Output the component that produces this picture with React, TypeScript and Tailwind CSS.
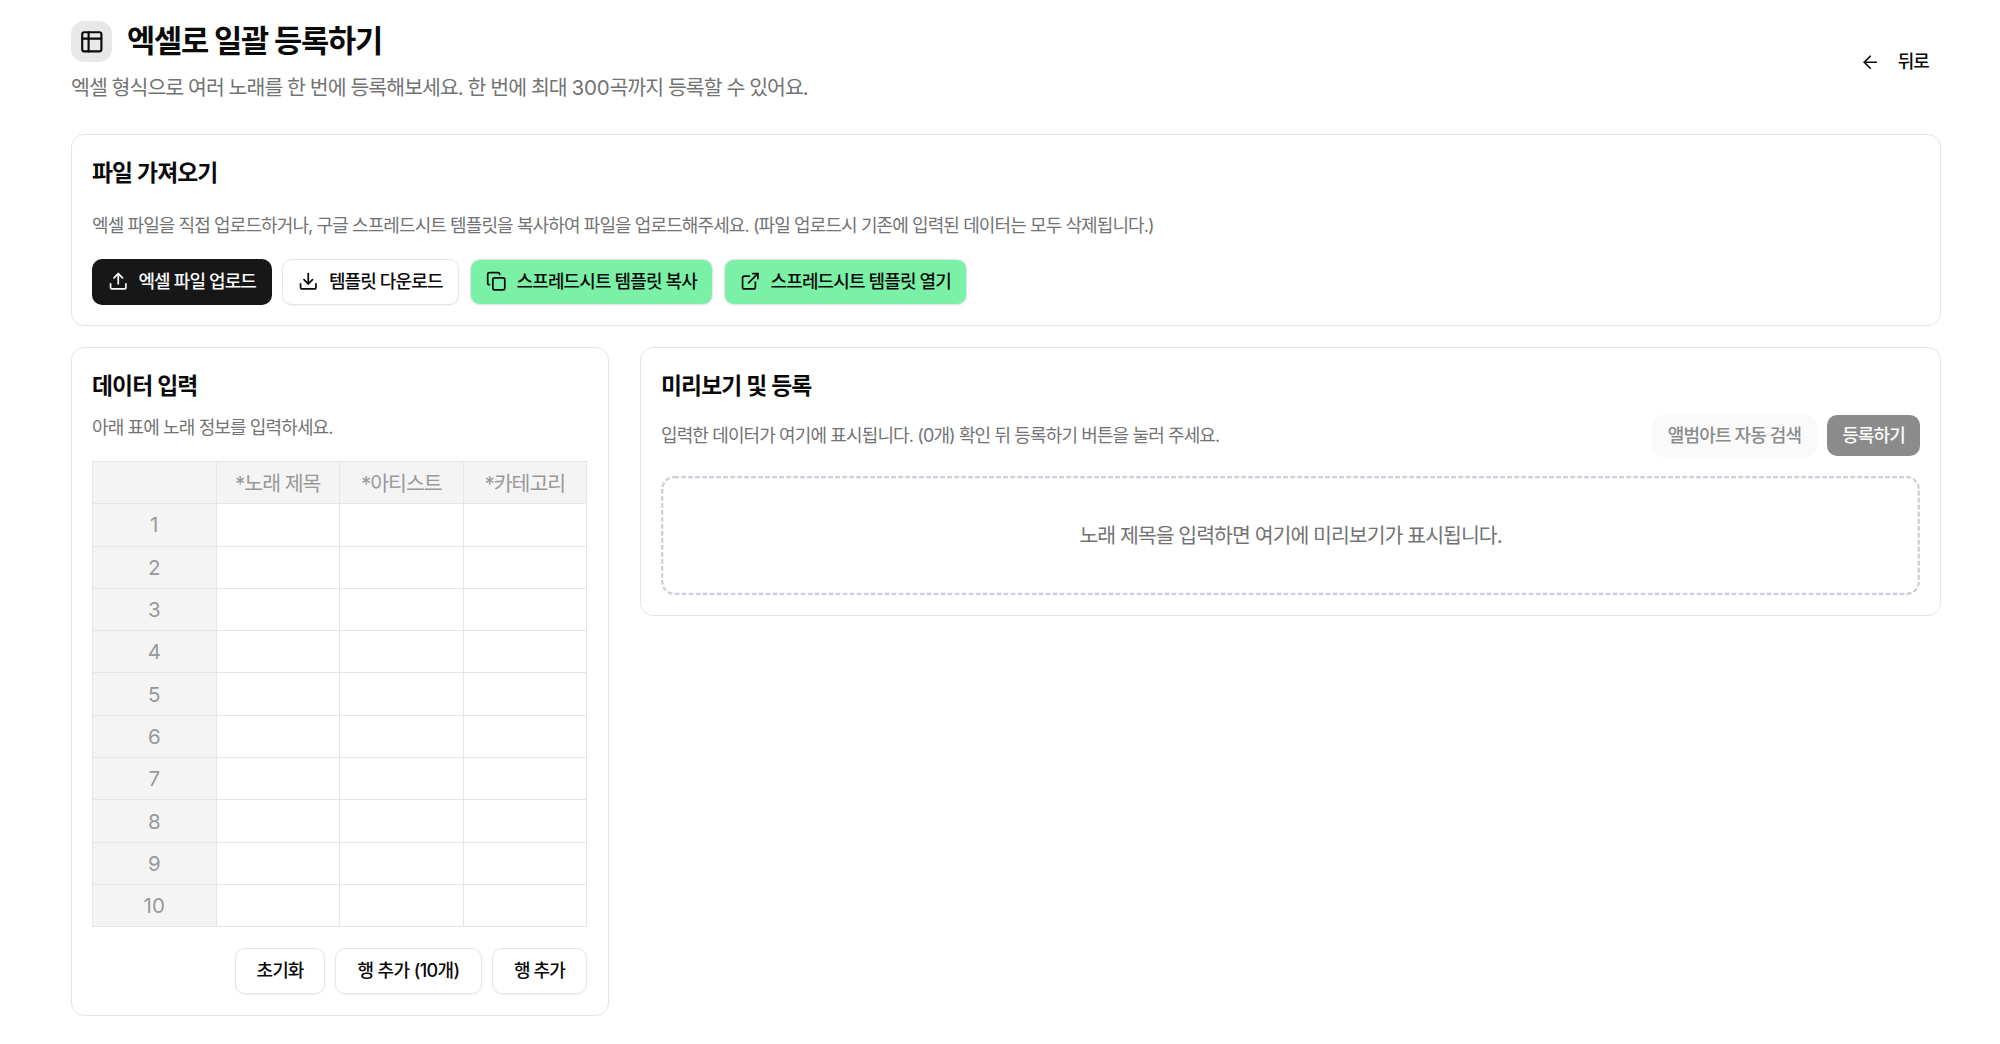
import type { ReactNode } from 'react';
import { ArrowLeft, Copy, Download, ExternalLink, Upload } from 'lucide-react';
import { clsx } from 'clsx';

const COLUMNS = ['*노래 제목', '*아티스트', '*카테고리'];
const ROWS = Array.from({ length: 10 }, (_, i) => i + 1);

function TableIcon() {
  return (
    <svg
      className="size-[25.6px]"
      viewBox="0 0 24 24"
      fill="none"
      stroke="currentColor"
      strokeWidth="2"
      strokeLinecap="round"
      strokeLinejoin="round"
    >
      <rect x="3" y="3" width="18" height="18" rx="2" />
      <path d="M3 9h18" />
      <path d="M9 3v18" />
    </svg>
  );
}

function Card({ className, children }: { className?: string; children: ReactNode }) {
  return (
    <section className={clsx('rounded-[13px] border border-[#e5e5e5] bg-white px-5 pt-[22px]', className)}>
      {children}
    </section>
  );
}

function CardTitle({ children }: { children: ReactNode }) {
  return <h2 className="text-[22.8px] leading-[31px] font-semibold">{children}</h2>;
}

function Button({ className, children }: { className?: string; children: ReactNode }) {
  return (
    <button
      type="button"
      className={clsx(
        'flex shrink-0 items-center justify-center rounded-[10px] text-[18px] font-medium whitespace-nowrap',
        className
      )}
    >
      {children}
    </button>
  );
}

export default function App() {
  return (
    <div className="min-h-screen bg-white pt-[21px] pr-[59px] pl-[71px] font-[Inter,'Noto_Sans_CJK_KR',sans-serif] tracking-[-0.88px] text-[#0a0a0a]">
      {/* Header */}
      <header className="flex h-[82px] items-center justify-between">
        <div>
          <div className="flex h-[41px] items-center gap-[15px]">
            <div className="flex size-[41px] items-center justify-center rounded-[13px] bg-[#e8e8e8]">
              <TableIcon />
            </div>
            <h1 className="-mt-0.5 text-[30.7px] leading-[41px] font-bold tracking-[-1.25px]">엑셀로 일괄 등록하기</h1>
          </div>
          <p className="mt-2.5 text-[20.5px] leading-[31px] tracking-[-0.96px] text-[#737373]">
            엑셀 형식으로 여러 노래를 한 번에 등록해보세요. 한 번에 최대{' '}
            <span className="tracking-[-0.2px]">300</span>곡까지 등록할 수 있어요.
          </p>
        </div>
        <button type="button" className="flex items-center gap-[17px] pr-[12px] text-[18px] font-medium">
          <ArrowLeft className="size-[20.5px]" />
          <span className="-mt-0.5">뒤로</span>
        </button>
      </header>

      <main className="mt-[31px] flex flex-col gap-[21px]">
        {/* File import */}
        <Card className="h-[192px]">
          <CardTitle>파일 가져오기</CardTitle>
          <p className="mt-[25px] text-[18px] leading-[26px] tracking-[-0.9px] text-[#737373]">
            엑셀 파일을 직접 업로드하거나, 구글 스프레드시트 템플릿을 복사하여 파일을 업로드해주세요. (파일 업로드시 기존에 입력된 데이터는 모두 삭제됩니다.)
          </p>
          <div className="mt-5 flex gap-[11px]">
            <Button className="-mr-px h-[46px] w-[180px] gap-2.5 bg-[#171717] pb-px text-[#fafafa]">
              <Upload className="size-[20.5px]" />
              엑셀 파일 업로드
            </Button>
            <Button className="h-[46px] w-[177px] gap-2.5 border border-[#e5e5e5] bg-white pb-px shadow-xs">
              <Download className="size-[20.5px]" />
              템플릿 다운로드
            </Button>
            <Button className="h-[46px] w-[243px] gap-2.5 border border-[#e5e5e5] bg-[#7bf1a8] pb-px shadow-xs">
              <Copy className="size-[20.5px]" />
              스프레드시트 템플릿 복사
            </Button>
            <Button className="h-[46px] w-[243px] gap-2.5 border border-[#e5e5e5] bg-[#7bf1a8] pb-px shadow-xs">
              <ExternalLink className="size-[20.5px]" />
              스프레드시트 템플릿 열기
            </Button>
          </div>
        </Card>

        <div className="flex items-start gap-[31px]">
          {/* Data entry */}
          <Card className="h-[669px] w-[538px] shrink-0">
            <CardTitle>데이터 입력</CardTitle>
            <p className="mt-3.5 text-[18px] leading-[26px] text-[#737373]">아래 표에 노래 정보를 입력하세요.</p>
            <table className="mt-5 w-[495px] table-fixed border-collapse text-[20.5px] leading-[30px] text-[#999]">
              <thead>
                <tr className="h-[42.3px] bg-[#f4f4f4]">
                  <th className="border border-[#e6e6e6]" />
                  {COLUMNS.map((column) => (
                    <th key={column} className="border border-[#e6e6e6] p-0 pt-0.5 font-normal tracking-[-1px]">
                      {column}
                    </th>
                  ))}
                </tr>
              </thead>
              <tbody>
                {ROWS.map((row) => (
                  <tr key={row} className="h-[42.3px]">
                    <td className="border border-[#e6e6e6] bg-[#f4f4f4] p-0 pt-px text-center tracking-normal">{row}</td>
                    {COLUMNS.map((column) => (
                      <td key={column} className="border border-[#e6e6e6] p-0" />
                    ))}
                  </tr>
                ))}
              </tbody>
            </table>
            <div className="mt-[21px] flex justify-end gap-2.5 pr-px">
              <Button className="h-[46px] w-[90px] border border-[#e5e5e5] pb-px shadow-xs">초기화</Button>
              <Button className="h-[46px] w-[147px] border border-[#e5e5e5] pb-px tracking-[-0.6px] shadow-xs">
                행 추가 (10개)
              </Button>
              <Button className="h-[46px] w-[95px] border border-[#e5e5e5] pb-px shadow-xs">행 추가</Button>
            </div>
          </Card>

          {/* Preview */}
          <Card className="h-[269px] flex-1">
            <CardTitle>미리보기 및 등록</CardTitle>
            <div className="mt-3.5 flex h-[41px] items-center gap-2.5">
              <p className="flex-1 text-[18px] text-[#737373]">
                입력한 데이터가 여기에 표시됩니다. (0개) 확인 뒤 등록하기 버튼을 눌러 주세요.
              </p>
              <Button className="h-[42px] w-[165px] bg-[#fafafa] text-[#8b8b8b]">앨범아트 자동 검색</Button>
              <Button className="h-[41px] w-[93px] bg-[#8b8b8b] text-[#fcfcfc]">등록하기</Button>
            </div>
            <div className="relative mt-5 flex h-[119px] items-center justify-center pt-0.5 text-[20.5px] tracking-[-0.98px] text-[#737373]">
              <svg className="absolute inset-0 size-full overflow-visible" fill="none">
                <rect
                  x="1.2"
                  y="1.2"
                  width="1256.6"
                  height="116.6"
                  rx="12"
                  stroke="#ccd0da"
                  strokeWidth="2.3"
                  strokeDasharray="4.8 2.2"
                />
              </svg>
              노래 제목을 입력하면 여기에 미리보기가 표시됩니다.
            </div>
          </Card>
        </div>
      </main>
    </div>
  );
}
